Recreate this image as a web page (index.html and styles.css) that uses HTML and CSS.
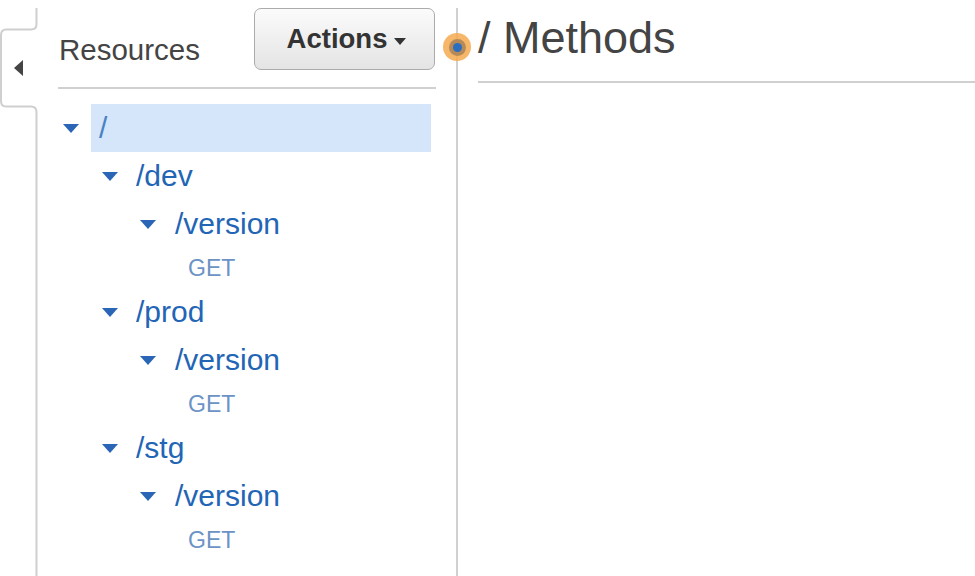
FILE: index.html
```html
<!DOCTYPE html>
<html>
<head>
<meta charset="utf-8">
<link rel="stylesheet" href="styles.css">
</head>
<body>
<div class="page">
  <div class="tabcol">
    <svg width="38" height="576" viewBox="0 0 38 576">
      <path d="M36.5 8 V24 Q36.5 29.5 31 29.5 H6 Q1 29.5 1 35 V101 Q1 106.5 6 106.5 H31 Q36.5 106.5 36.5 112 V576" fill="none" stroke="#cfcfcf" stroke-width="2"/>
      <polygon points="14,68 23,60 23,76" fill="#444"/>
    </svg>
  </div>
  <div class="panel">
    <div class="panel-head">
      <h2 class="panel-title">Resources</h2>
      <button class="btn-actions">Actions<span class="caret-down"></span></button>
    </div>
    <div class="tree">
      <div class="row lvl0 selected"><span class="tri"></span><span class="label">/</span></div>
      <div class="row lvl1"><span class="tri"></span><span class="label">/dev</span></div>
      <div class="row lvl2"><span class="tri"></span><span class="label">/version</span></div>
      <div class="method">GET</div>
      <div class="row lvl1"><span class="tri"></span><span class="label">/prod</span></div>
      <div class="row lvl2"><span class="tri"></span><span class="label">/version</span></div>
      <div class="method">GET</div>
      <div class="row lvl1"><span class="tri"></span><span class="label">/stg</span></div>
      <div class="row lvl2"><span class="tri"></span><span class="label">/version</span></div>
      <div class="method">GET</div>
    </div>
  </div>
  <div class="divider">
    <span class="handle"><span class="handle-ring"><span class="handle-dot"></span></span></span>
  </div>
  <div class="main">
    <h1 class="main-title">/ Methods</h1>
  </div>
</div>
</body>
</html>
```

FILE: styles.css
```css
html, body {
  margin: 0;
  padding: 0;
  background: #fff;
  overflow: hidden;
}
body {
  font-family: "Liberation Sans", Arial, sans-serif;
}
.page {
  display: flex;
  height: 576px;
  width: 975px;
}
.tabcol {
  width: 38px;
  flex: none;
}
.tabcol svg {
  display: block;
}
.panel {
  width: 378px;
  margin-left: 20px;
  padding-top: 8px;
  flex: none;
}
.panel-head {
  display: flex;
  justify-content: space-between;
  align-items: flex-start;
  height: 79px;
  border-bottom: 2px solid #d0d0d0;
}
.panel-title {
  margin: 26px 0 0 1px;
  font-size: 29.5px;
  font-weight: normal;
  color: #444;
  line-height: 32px;
}
.btn-actions {
  width: 181px;
  height: 62px;
  margin-right: 1px;
  border: 1.5px solid #ababab;
  border-radius: 7px;
  background: linear-gradient(#fbfbfb, #e4e4e4);
  font-family: "Liberation Sans", Arial, sans-serif;
  font-weight: bold;
  font-size: 27.5px;
  color: #333;
  display: flex;
  align-items: center;
  justify-content: center;
  padding: 0 0 0 4px;
}
.caret-down {
  display: inline-block;
  width: 0;
  height: 0;
  border-left: 6px solid transparent;
  border-right: 6px solid transparent;
  border-top: 7px solid #333;
  margin-left: 7px;
  margin-top: 4px;
}
.tree {
  margin-top: 15px;
  padding-right: 5px;
}
.row {
  display: flex;
  align-items: center;
  height: 48px;
}
.lvl0 { padding-left: 5px; }
.lvl1 { padding-left: 44px; }
.lvl2 { padding-left: 82px; }
.tri {
  width: 0;
  height: 0;
  border-left: 8.5px solid transparent;
  border-right: 8.5px solid transparent;
  border-top: 9px solid #2a65b6;
  margin-right: 12px;
  flex: none;
}
.label {
  flex: 1;
  height: 48px;
  line-height: 48px;
  padding-left: 8px;
  font-size: 30px;
  color: #2265b5;
}
.lvl1 .label { padding-left: 6px; }
.lvl2 .label { padding-left: 7px; }
.selected .label {
  background: #d5e6fb;
  color: #4a80c4;
}
.method {
  height: 40px;
  line-height: 40px;
  padding-left: 130px;
  font-size: 23px;
  color: #6b93c5;
}
.divider {
  position: relative;
  width: 2px;
  margin-left: 20px;
  margin-top: 8px;
  background: #d0d0d0;
  flex: none;
}
.handle {
  position: absolute;
  left: -13px;
  top: 25px;
  width: 28px;
  height: 28px;
  border-radius: 50%;
  background: rgba(245, 170, 80, 0.85);
  display: flex;
  align-items: center;
  justify-content: center;
}
.handle-ring {
  width: 17px;
  height: 17px;
  border-radius: 50%;
  background: #b58a58;
  display: flex;
  align-items: center;
  justify-content: center;
}
.handle-dot {
  width: 9px;
  height: 9px;
  border-radius: 50%;
  background: #2a6ec0;
}
.main {
  flex: 1;
  padding-left: 20px;
}
.main-title {
  margin: 0;
  padding-top: 14px;
  line-height: 48px;
  font-size: 45px;
  font-weight: normal;
  color: #444;
  border-bottom: 2px solid #d0d0d0;
  box-sizing: border-box;
  height: 83px;
}
```
